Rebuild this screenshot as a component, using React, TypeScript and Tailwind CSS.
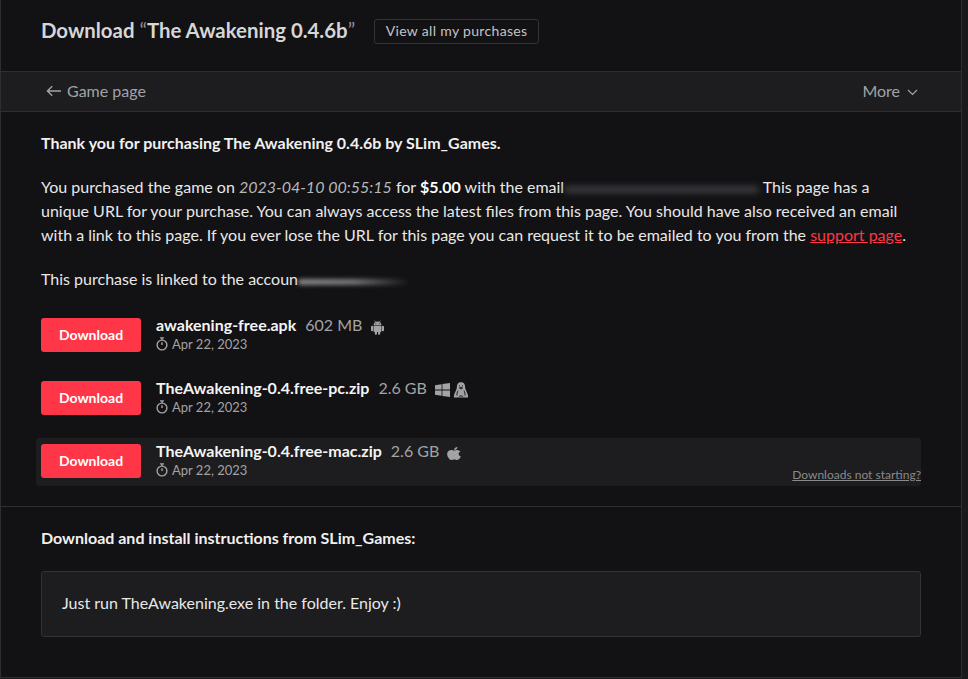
import { FaApple } from 'react-icons/fa';

type Upload = {
  name: string;
  size: string;
  icons: React.ReactNode[];
  active?: boolean;
};

function AndroidIcon() {
  return (
    <svg width="15" height="15" viewBox="0 0 15 15" fill="currentColor">
      <path d="M4.6 0.6 5.8 2.4M10.4 0.6 9.2 2.4" stroke="currentColor" strokeWidth="0.7" />
      <path d="M3.6 5.2C3.6 3 5.3 1.6 7.5 1.6s3.9 1.4 3.9 3.6z" />
      <rect x="3.6" y="5.800" width="7.800" height="6.200" rx="0.8" />
      <rect x="1" y="5.800" width="2.200" height="5.400" rx="1" />
      <rect x="11.800" y="5.800" width="2.200" height="5.400" rx="1" />
      <rect x="4.800" y="11" width="2.200" height="3.800" rx="1" />
      <rect x="8" y="11" width="2.200" height="3.800" rx="1" />
      <circle cx="5.900" cy="3.700" r="0.5" fill="#121114" />
      <circle cx="9.100" cy="3.700" r="0.5" fill="#121114" />
    </svg>
  );
}

function WindowsIcon() {
  return (
    <svg width="15" height="14" viewBox="0 0 15 14" fill="currentColor">
      <path d="M0 2.200 6.600 1.200V6.600H0zM7.400 1 15 0V6.600H7.400zM0 7.400H6.600V12.800L0 11.800zM7.400 7.400H15V14L7.400 13z" />
    </svg>
  );
}

function TuxIcon() {
  return (
    <svg width="16" height="16" viewBox="0 0 16 16" fill="currentColor">
      <path d="M8 0.300C4.800 0.300 3.900 2.600 3.900 5 3.900 7 2.700 8.600 1.900 10.800 1.300 12.400 0.600 13.600 1 15.600H15C15.400 13.600 14.700 12.400 14.100 10.800 13.300 8.600 12.100 7 12.100 5 12.100 2.600 11.200 0.300 8 0.300z" />
      <circle cx="6.500" cy="3.800" r="0.6" fill="#121114" />
      <circle cx="9.500" cy="3.800" r="0.6" fill="#121114" />
      <path d="M6.400 6 8 5.200 9.600 6 8 7zM5 8.600C4.200 10.200 3.800 11.800 4 13.600M11 8.600C11.800 10.200 12.200 11.800 12 13.600M5.800 14.900c1-1.400 3.400-1.400 4.400 0" fill="none" stroke="#121114" strokeWidth="0.9" />
    </svg>
  );
}

const uploads: Upload[] = [
  { name: 'awakening-free.apk', size: '602 MB', icons: [<AndroidIcon key="android" />] },
  { name: 'TheAwakening-0.4.free-pc.zip', size: '2.6 GB', icons: [<WindowsIcon key="win" />, <TuxIcon key="linux" />] },
  {
    name: 'TheAwakening-0.4.free-mac.zip',
    size: '2.6 GB',
    icons: [<FaApple key="apple" className="h-[15px] w-[14px]" preserveAspectRatio="none" />],
    active: true,
  },
];

function Stopwatch() {
  return (
    <svg width="12" height="14" viewBox="0 0 12 14" fill="none" stroke="currentColor" strokeWidth="1.4" className="shrink-0">
      <circle cx="6" cy="8" r="4.900" />
      <path d="M4 0.900h4M6 1v2M6 8V5.200" />
    </svg>
  );
}

function UploadRow({ upload }: { upload: Upload }) {
  return (
    <div className={`relative -ml-[5px] flex h-[48px] items-start rounded-[3px] pl-[5px] ${upload.active ? 'bg-[#1d1c1f]' : ''}`}>
      <button className="mt-[6px] h-[34px] w-[100px] rounded-[3px] bg-[#ff3647] text-[14px] font-bold text-white">
        Download
      </button>
      <div className="ml-[15px] mt-[2px]">
        <div className="flex h-[22px] items-center text-[16px] leading-[22px]">
          <strong className="font-bold text-[#f4f4f4]">{upload.name}</strong>
          <span className="ml-[9px] text-[#a3a3a3]">{upload.size}</span>
          <span className="ml-[8px] mt-[4px] flex items-center gap-[3px] text-[#a3a3a3]">{upload.icons}</span>
        </div>
        <div className="-mt-[1px] flex h-[18px] items-center gap-[4px] text-[13px] text-[#a3a3a3]">
          <Stopwatch />
          Apr 22, 2023
        </div>
      </div>
      {upload.active && (
        <a className="absolute bottom-[3px] right-0 text-[12px] leading-[16px] text-[#8a8a8a] underline">
          Downloads not starting?
        </a>
      )}
    </div>
  );
}

export default function App() {
  return (
    <div className="min-h-[679px] bg-[#1a191c] font-['Lato','Noto_Sans',sans-serif]">
      <div className="h-[678px] w-[962px] border-x border-b border-[#2e2d30] bg-[#121114] text-[16px] leading-[24px] text-[#e8e8e8]">
        <header className="flex h-[71px] items-center pb-[9px] pl-[40px]">
          <h2 className="mb-[2px] text-[20.4px] font-bold text-[#d6d6d6]">
            Download <span className="font-normal text-[#8f8f8f]">“</span>The Awakening 0.4.6b
            <span className="font-normal text-[#8f8f8f]">”</span>
          </h2>
          <a className="ml-[19px] flex h-[25px] w-[165px] items-center justify-center rounded-[3px] border border-[#333235] text-[14px] tracking-[0.33px] text-[#c4c4c4]">
            View all my purchases
          </a>
        </header>

        <nav className="flex h-[41px] items-center justify-between border-y border-[#2e2d30] bg-[#1d1c1f] pb-[2px] pl-[45px] pr-[43px] text-[#a3a3a3]">
          <a className="flex items-center gap-[5px]">
            <svg width="16" height="12" viewBox="0 0 16 12" fill="none" stroke="currentColor" strokeWidth="1.4">
              <path d="M15 6H1.500M6.200 1.200 1.400 6l4.800 4.800" />
            </svg>
            Game page
          </a>
          <a className="flex items-center gap-[7px]">
            More
            <svg width="11" height="7" viewBox="0 0 11 7" fill="none" stroke="currentColor" strokeWidth="1.2" className="mt-[4px]">
              <path d="M1 1l4.500 4.500L10 1" />
            </svg>
          </a>
        </nav>

        <main className="px-[40px] pt-[19px]">
          <p className="font-bold text-[#f0f0f0]">Thank you for purchasing The Awakening 0.4.6b by SLim_Games.</p>
          <p className="mt-[20px]">
            You purchased the game on <em className="text-[#b8b8b8]">2023-04-10 00:55:15</em> for{' '}
            <strong className="text-white">$5.00</strong> with the email
            <span className="inline-block h-[7px] w-[195px] rounded-full bg-[#3c3c40] blur-[3px]" />
            {' '}This page has a<br />
            unique URL for your purchase. You can always access the latest files from this page. You
            should have also received an email with a link to this page. If you ever lose the URL for this page you can
            request it to be emailed to you from the <a className="text-[#ff3647] underline">support page</a>.
          </p>
          <p className="mt-[20px]">
            This purchase is linked to the accoun
            <span className="inline-block h-[6px] w-[112px] rounded-full bg-linear-to-r from-[#88888b] via-[#77777a] to-transparent blur-[2px]" />
          </p>

          <div className="mt-[21px] flex flex-col gap-[15px]">
            {uploads.map((upload) => (
              <UploadRow key={upload.name} upload={upload} />
            ))}
          </div>
        </main>

        <section className="mt-[20px] border-t border-[#2e2d30] px-[40px] pt-[19px]">
          <p className="font-bold text-[#f0f0f0]">Download and install instructions from SLim_Games:</p>
          <div className="mt-[21px] flex h-[66px] items-center rounded-[3px] border border-[#333235] bg-[#1d1c1f] px-[20px] pb-[3px]">
            Just run TheAwakening.exe in the folder. Enjoy :)
          </div>
        </section>
      </div>
    </div>
  );
}
